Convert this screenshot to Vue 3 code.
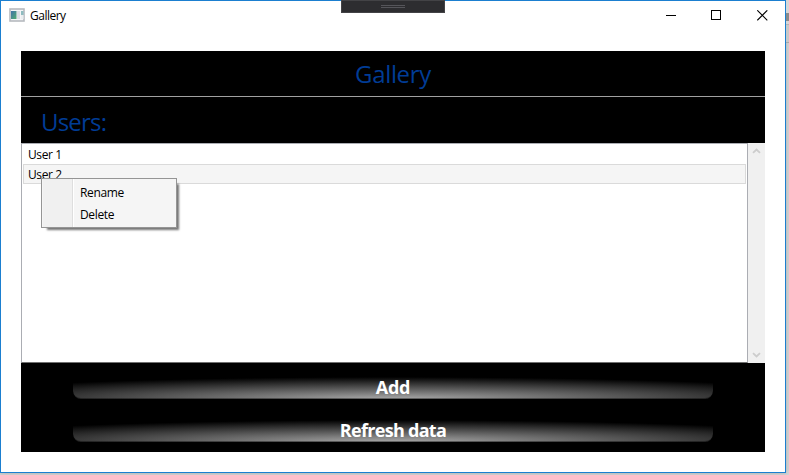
<script setup>
import { ref } from 'vue'

const users = ['User 1', 'User 2']
const hovered = ref(1)
const actions = ['Rename', 'Delete']
</script>

<template>
  <div class="desktop">
    <main class="window">
      <header class="titlebar">
        <svg class="app-icon" width="16" height="14" viewBox="0 0 16 14">
          <defs>
            <linearGradient id="pane" x1="0" y1="0" x2="1" y2="1">
              <stop offset="0" stop-color="#4272aa" />
              <stop offset="1" stop-color="#52ad70" />
            </linearGradient>
          </defs>
          <rect x="1" y="1" width="14" height="12" fill="#f5f5f7" stroke="#b6babf" stroke-width="1.6" />
          <rect x="2" y="3" width="5.5" height="8" fill="url(#pane)" />
          <rect x="8" y="3" width="3" height="8" fill="#dcdde4" />
          <rect x="12" y="3" width="2.5" height="4" fill="#8fbcc0" />
          <rect x="12" y="7" width="2.5" height="4" fill="#eceef0" />
        </svg>
        <span class="caption">Gallery</span>
        <div class="controls">
          <svg width="11" height="11" viewBox="0 0 11 11"><path d="M0 5.5h10" /></svg>
          <svg width="11" height="11" viewBox="0 0 11 11"><path d="M.5 .5h9v9h-9z" /></svg>
          <svg class="close" width="11" height="11" viewBox="0 0 11 11"><path d="M.3 .3l10 10M10.3 .3l-10 10" /></svg>
        </div>
      </header>

      <section class="panel">
        <h1 class="heading"><span>Gallery</span></h1>
        <h2 class="subheading"><span>Users:</span></h2>
        <div class="list">
          <ul class="items">
            <li v-for="(user, i) in users" :key="user" :class="{ hovered: hovered === i }">
              <span>{{ user }}</span>
            </li>
          </ul>
          <div class="scrollbar">
            <svg width="9" height="6" viewBox="0 0 9 6"><path d="M1 4.8l3.5-3.3L8 4.8" /></svg>
            <svg width="9" height="6" viewBox="0 0 9 6"><path d="M1 1.2l3.5 3.3L8 1.2" /></svg>
          </div>
        </div>
        <footer class="buttons">
          <button class="add"><span>Add</span></button>
          <button class="refresh"><span>Refresh data</span></button>
        </footer>
      </section>
    </main>

    <div class="debug-bar"><i></i></div>

    <ul class="menu">
      <li v-for="action in actions" :key="action">
        <span>{{ action }}</span>
      </li>
    </ul>
    <div class="behind"></div>
  </div>
</template>

<style>
body {
  margin: 0;
  overflow: hidden;
}
</style>

<style scoped>
.desktop {
  position: relative;
  box-sizing: border-box;
  width: 789px;
  height: 475px;
  overflow: hidden;
  background: #d4d4d4;
  font-family: "Open Sans", "Noto Sans", sans-serif;
  font-size: 12px;
  color: #000;
}
.window {
  box-sizing: border-box;
  width: 786px;
  height: 473px;
  border: 1px solid #1b7fd0;
  background: #fff;
  box-shadow: 0 0 4px #aaa;
}
.titlebar {
  display: flex;
  align-items: center;
  height: 30px;
  padding-left: 8px;
}
.app-icon {
  margin-top: -2px;
}
.caption {
  margin-top: -2px;
  margin-left: 5px;
  font-size: 12px;
  letter-spacing: -0.5px;
}
.controls {
  display: flex;
  gap: 34px;
  margin-left: auto;
  margin-right: 17px;
  margin-top: -2px;
}
.controls svg {
  fill: none;
  stroke: #000;
  stroke-width: 1;
  shape-rendering: crispEdges;
}
.controls .close {
  margin-left: 1px;
  shape-rendering: auto;
  stroke-width: 1.1;
}
.panel {
  width: 744px;
  height: 401px;
  margin: 20px 0 0 20px;
  background: #000;
}
.heading,
.subheading {
  box-sizing: border-box;
  margin: 0;
  font-size: 24px;
  font-weight: 400;
  color: #003c96;
  line-height: 45px;
}
.heading {
  height: 46px;
  border-bottom: 1px solid #a0a0a0;
  text-align: center;
  letter-spacing: -0.35px;
}
.subheading {
  height: 46px;
  padding: 2px 0 0 20px;
  letter-spacing: -0.8px;
}
.list {
  display: flex;
  height: 220px;
}
.items {
  box-sizing: border-box;
  width: 727px;
  margin: 0;
  padding: 1px;
  border: 1px solid #abadb3;
  border-bottom-color: #707070;
  background: #fff;
  list-style: none;
}
.items li {
  box-sizing: border-box;
  height: 20px;
  padding-left: 4px;
  border: 1px solid transparent;
  line-height: 18px;
  letter-spacing: -0.4px;
}
.items li:first-child {
  height: 19px;
}
.items li.hovered {
  border-color: #dadada;
  background: #f5f5f5;
  line-height: 20px;
}
.scrollbar {
  box-sizing: border-box;
  display: flex;
  flex: 1;
  flex-direction: column;
  align-items: center;
  justify-content: space-between;
  padding: 5px 0;
  background: #f0f0f0;
}
.scrollbar svg {
  fill: none;
  stroke: #cdcdcd;
  stroke-width: 1.8;
}
.buttons {
  display: flex;
  flex-direction: column;
  align-items: center;
  gap: 20px;
  padding-top: 13px;
}
.buttons button {
  box-sizing: border-box;
  width: 640px;
  height: 23px;
  padding: 0;
  border: 0;
  border-bottom: 1px solid #0006;
  border-radius: 0 0 8px 8px;
  background: radial-gradient(ellipse 480px 22px at 50% 100%, #aaa, #000) border-box;
  color: #fff;
  font-family: inherit;
  font-size: 18px;
  font-weight: 700;
  line-height: 22px;
}
.add {
  letter-spacing: -0.2px;
}
.refresh {
  letter-spacing: -0.7px;
}
.debug-bar {
  position: absolute;
  top: 0;
  left: 341px;
  box-sizing: border-box;
  display: flex;
  justify-content: center;
  width: 104px;
  height: 13px;
  padding-top: 4px;
  border: 1px solid #434346;
  background: #2d2d30;
}
.debug-bar i {
  box-sizing: border-box;
  width: 24px;
  height: 3px;
  border: solid #55555a;
  border-width: 1px 0;
}
.menu {
  position: absolute;
  top: 178px;
  left: 41px;
  box-sizing: border-box;
  width: 136px;
  height: 50px;
  margin: 0;
  padding: 3px 2px;
  border: 1px solid #959595;
  background: linear-gradient(90deg, #f5f5f5 0 1px, #f0f0f0 1px 30px, #dedede 30px 31px, #fff 31px 32px, #f5f5f5 32px);
  box-shadow: 4px 4px 2px -2px #0000008c;
  list-style: none;
}
.menu li {
  height: 22px;
  padding-left: 36px;
  line-height: 22px;
  letter-spacing: -0.35px;
}
.behind {
  position: absolute;
  top: 0;
  right: 0;
  width: 3px;
  height: 43px;
  box-sizing: border-box;
  border-bottom: 1px solid #a8a8a8;
  background: linear-gradient(#d6d6d6 0 13px, #8a8a8a 13px 21px, #d6d6d6 21px 24px, #b4b4b4 24px 25px, #c8c8c8 25px);
}
</style>
